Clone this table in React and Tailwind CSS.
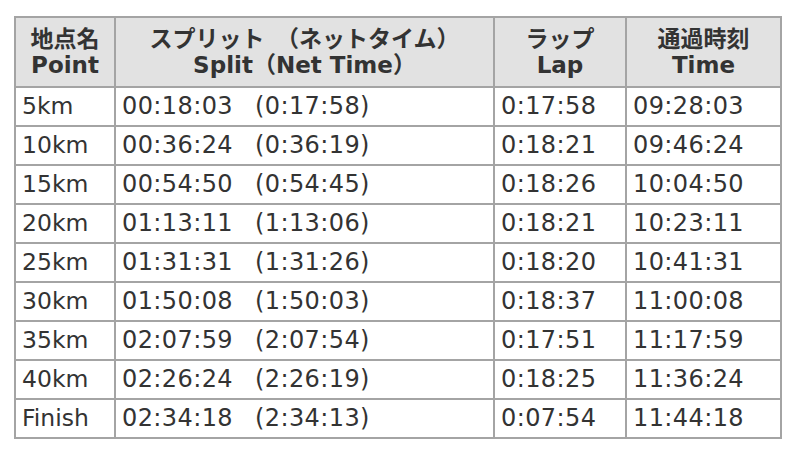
import React from "react";

const rows = [
  ["5km", "00:18:03", "(0:17:58)", "0:17:58", "09:28:03"],
  ["10km", "00:36:24", "(0:36:19)", "0:18:21", "09:46:24"],
  ["15km", "00:54:50", "(0:54:45)", "0:18:26", "10:04:50"],
  ["20km", "01:13:11", "(1:13:06)", "0:18:21", "10:23:11"],
  ["25km", "01:31:31", "(1:31:26)", "0:18:20", "10:41:31"],
  ["30km", "01:50:08", "(1:50:03)", "0:18:37", "11:00:08"],
  ["35km", "02:07:59", "(2:07:54)", "0:17:51", "11:17:59"],
  ["40km", "02:26:24", "(2:26:19)", "0:18:25", "11:36:24"],
  ["Finish", "02:34:18", "(2:34:13)", "0:07:54", "11:44:18"],
];

const headers = [
  ["地点名", "Point"],
  ["スプリット　（ネットタイム）", "Split（Net Time）"],
  ["ラップ", "Lap"],
  ["通過時刻", "Time"],
];

export default function App() {
  return (
    <div className="w-[800px] h-[457px] bg-white pl-[14px] pt-[16px] font-['DejaVu_Sans','Noto_Sans_CJK_JP',sans-serif] text-[#333333]">
      <div className="grid grid-cols-[100px_379px_132px_155px] w-[768px] border-l-2 border-t-2 border-[#a4a4a4]">
        {headers.map((h, i) => (
          <div
            key={i}
            className="h-[70px] bg-[#e2e2e2] border-r-2 border-b-2 border-[#a4a4a4] flex flex-col items-center justify-center font-bold text-[23px] leading-[26px]"
          >
            <div>{h[0]}</div>
            <div>{h[1]}</div>
          </div>
        ))}
        {rows.map((r, i) => (
          <React.Fragment key={i}>
            <div className="h-[39px] border-r-2 border-b-2 border-[#a4a4a4] pl-[6px] flex items-center text-[23.5px] leading-[27px]">
              {r[0]}
            </div>
            <div className="h-[39px] border-r-2 border-b-2 border-[#a4a4a4] pl-[6px] flex items-center text-[24px] leading-[27px] tracking-[0.4px]">
              <span>{r[1]}</span>
              <span className="ml-[22px]">{r[2]}</span>
            </div>
            <div className="h-[39px] border-r-2 border-b-2 border-[#a4a4a4] pl-[6px] flex items-center text-[24px] leading-[27px] tracking-[0.4px]">
              {r[3]}
            </div>
            <div className="h-[39px] border-r-2 border-b-2 border-[#a4a4a4] pl-[6px] flex items-center text-[24px] leading-[27px] tracking-[0.4px]">
              {r[4]}
            </div>
          </React.Fragment>
        ))}
      </div>
    </div>
  );
}
